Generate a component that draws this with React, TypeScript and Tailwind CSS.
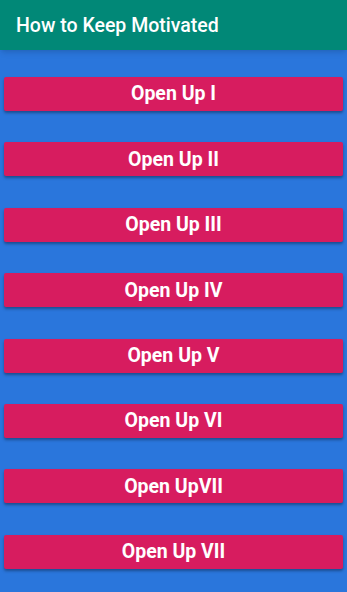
const items = [
  "Open Up I",
  "Open Up II",
  "Open Up III",
  "Open Up IV",
  "Open Up V",
  "Open Up VI",
  "Open UpVII",
  "Open Up VII",
]

export default function App() {
  return (
    <div className="w-[347px] h-[592px] bg-[#2a76dc] overflow-hidden" style={{ fontFamily: "Roboto, sans-serif" }}>
      <header className="h-[50px] bg-[#018877] flex items-center px-4 pt-[1px] shadow-md">
        <h1 className="text-white text-[19.5px] font-medium">How to Keep Motivated</h1>
      </header>
      <div className="flex flex-col gap-[31.4px] pt-[27px] px-[4px]">
        {items.map((item, i) => (
          <button
            key={i}
            className="h-[34px] bg-[#d71c5f] text-white text-[19.5px] font-bold rounded-[2px] shadow-[0_2px_3px_rgba(0,0,0,0.35)] flex items-center justify-center"
          >
            {item}
          </button>
        ))}
      </div>
    </div>
  )
}
